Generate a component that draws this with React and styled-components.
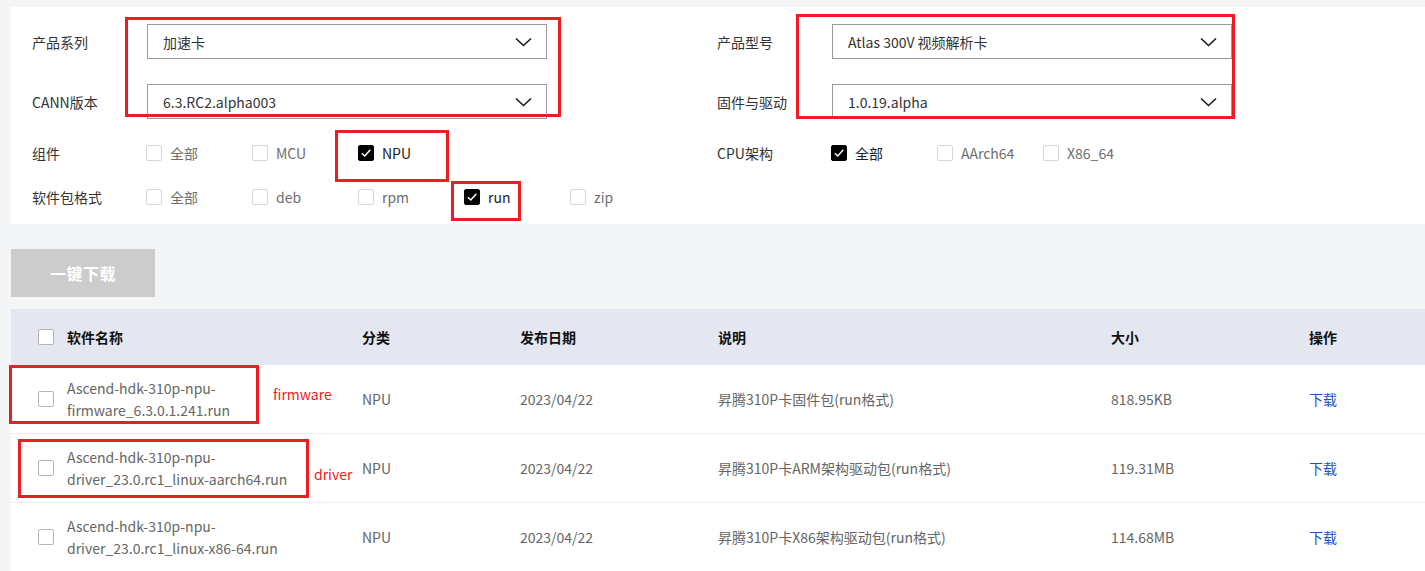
import React from "react";
import styled, { createGlobalStyle } from "styled-components";

const GlobalStyle = createGlobalStyle`
  html, body {
    margin: 0;
    padding: 0;
    background: #f4f5f7;
    font-family: "Noto Sans CJK SC", "Noto Sans", sans-serif;
  }
  * { box-sizing: border-box; }
`;

const Page = styled.div`
  position: relative;
  width: 1425px;
  min-height: 571px;
  overflow: hidden;
  padding-top: 7px;
  padding-left: 11px;
`;

const Panel = styled.section`
  background: #ffffff;
  padding: 17px 0 5px 21px;
  display: flex;
  flex-direction: column;
`;

const PanelRow = styled.div`
  display: grid;
  grid-template-columns: 685px 1fr;
  height: ${(p) => p.$h}px;
  margin-top: ${(p) => p.$mt || 0}px;
`;

const Field = styled.div`
  display: flex;
  align-items: center;
  height: 100%;
`;

const FieldLabel = styled.div`
  width: 114px;
  flex: none;
  font-size: 14px;
  color: #333333;
  line-height: 20px;
  padding-top: ${(p) => (p.$select ? 1 : 0)}px;
`;

const SelectBox = styled.div`
  width: 400px;
  height: 35px;
  margin-left: 1px;
  border: 1px solid #9a9a9a;
  display: flex;
  align-items: center;
  justify-content: space-between;
  padding: 0 14px 0 15px;
  font-size: 14px;
  color: #333333;
  background: #fff;
`;

const CheckGroup = styled.div`
  display: flex;
  align-items: center;
`;

const CheckItem = styled.label`
  width: 106px;
  display: flex;
  align-items: center;
  gap: 8px;
  font-size: 14px;
  color: ${(p) => (p.$checked ? "#222222" : "#6e6e6e")};
`;

const Box = styled.span`
  width: 16px;
  height: 16px;
  flex: none;
  border-radius: 2px;
  display: inline-flex;
  align-items: center;
  justify-content: center;
  background: ${(p) => (p.$checked ? "#000000" : "#ffffff")};
  border: 1px solid ${(p) => (p.$checked ? "#000000" : p.$dark ? "#b5b5b5" : "#d6d6d6")};
`;

const Button = styled.button`
  display: block;
  margin-top: 25px;
  width: 144px;
  height: 48px;
  border: none;
  background: #cccccc;
  color: #ffffff;
  font-family: inherit;
  font-size: 16px;
  font-weight: 700;
  letter-spacing: 0.5px;
`;

const Table = styled.div`
  margin-top: 12px;
  background: #ffffff;
`;

const cols = "351px 158px 198px 393px 198px 1fr";

const HeadRow = styled.div`
  display: grid;
  grid-template-columns: ${cols};
  height: 56px;
  align-items: center;
  background: #e4e7f0;
  font-size: 14px;
  font-weight: 700;
  color: #111111;
`;

const BodyRow = styled.div`
  display: grid;
  grid-template-columns: ${cols};
  height: 69px;
  align-items: center;
  border-bottom: 1px solid #eeeeee;
  font-size: 14px;
  color: #666666;
`;

const NameCell = styled.div`
  display: flex;
  align-items: center;
  gap: 13px;
  padding-left: 27px;
`;

const NameText = styled.div`
  line-height: 22px;
  display: flex;
  flex-direction: column;
`;

const Cell = styled.div`
  white-space: nowrap;
`;

const Link = styled.a`
  color: #2150c6;
  text-decoration: none;
`;

const Mark = styled.div`
  position: absolute;
  left: ${(p) => p.$x}px;
  top: ${(p) => p.$y}px;
  width: ${(p) => p.$w}px;
  height: ${(p) => p.$h}px;
  border: 3px solid #ee1c25;
  pointer-events: none;
`;

const Note = styled.span`
  position: absolute;
  left: ${(p) => p.$x}px;
  top: ${(p) => p.$y}px;
  color: #ee1c25;
  font-size: 14px;
  line-height: 20px;
`;

const Chevron = () => (
  <svg width="17" height="10" viewBox="0 0 17 10" fill="none">
    <polyline points="1,1.5 8.5,8.5 16,1.5" stroke="#1a1a1a" strokeWidth="1.6" />
  </svg>
);

const Tick = () => (
  <svg width="12" height="12" viewBox="0 0 12 12" fill="none">
    <polyline points="1.8,6.2 4.8,9 10.3,2.8" stroke="#ffffff" strokeWidth="1.5" />
  </svg>
);

const Check = ({ checked, dark }) => (
  <Box $checked={checked} $dark={dark}>{checked && <Tick />}</Box>
);

const Option = ({ label, checked }) => (
  <CheckItem $checked={checked}>
    <Check checked={checked} />
    {label}
  </CheckItem>
);

const Select = ({ value }) => (
  <SelectBox>
    <span>{value}</span>
    <Chevron />
  </SelectBox>
);

const rows = [
  {
    name: ["Ascend-hdk-310p-npu-", "firmware_6.3.0.1.241.run"],
    desc: "昇腾310P卡固件包(run格式)",
    size: "818.95KB",
  },
  {
    name: ["Ascend-hdk-310p-npu-", "driver_23.0.rc1_linux-aarch64.run"],
    desc: "昇腾310P卡ARM架构驱动包(run格式)",
    size: "119.31MB",
  },
  {
    name: ["Ascend-hdk-310p-npu-", "driver_23.0.rc1_linux-x86-64.run"],
    desc: "昇腾310P卡X86架构驱动包(run格式)",
    size: "114.68MB",
  },
];

export default function App() {
  return (
    <Page>
      <GlobalStyle />
      <Panel>
        <PanelRow $h={35}>
          <Field>
            <FieldLabel $select>产品系列</FieldLabel>
            <Select value="加速卡" />
          </Field>
          <Field>
            <FieldLabel $select>产品型号</FieldLabel>
            <Select value="Atlas 300V 视频解析卡" />
          </Field>
        </PanelRow>
        <PanelRow $h={35} $mt={25}>
          <Field>
            <FieldLabel $select>CANN版本</FieldLabel>
            <Select value="6.3.RC2.alpha003" />
          </Field>
          <Field>
            <FieldLabel $select>固件与驱动</FieldLabel>
            <Select value="1.0.19.alpha" />
          </Field>
        </PanelRow>
        <PanelRow $h={44} $mt={12}>
          <Field>
            <FieldLabel>组件</FieldLabel>
            <CheckGroup>
              <Option label="全部" />
              <Option label="MCU" />
              <Option label="NPU" checked />
            </CheckGroup>
          </Field>
          <Field>
            <FieldLabel>CPU架构</FieldLabel>
            <CheckGroup>
              <Option label="全部" checked />
              <Option label="AArch64" />
              <Option label="X86_64" />
            </CheckGroup>
          </Field>
        </PanelRow>
        <PanelRow $h={44}>
          <Field>
            <FieldLabel>软件包格式</FieldLabel>
            <CheckGroup>
              <Option label="全部" />
              <Option label="deb" />
              <Option label="rpm" />
              <Option label="run" checked />
              <Option label="zip" />
            </CheckGroup>
          </Field>
          <div />
        </PanelRow>
      </Panel>

      <Button>一键下载</Button>

      <Table>
        <HeadRow>
          <NameCell>
            <Check dark />
            <span>软件名称</span>
          </NameCell>
          <Cell>分类</Cell>
          <Cell>发布日期</Cell>
          <Cell>说明</Cell>
          <Cell>大小</Cell>
          <Cell>操作</Cell>
        </HeadRow>
        {rows.map((r, i) => (
          <BodyRow key={i}>
            <NameCell>
              <Check dark />
              <NameText>
                <span>{r.name[0]}</span>
                <span>{r.name[1]}</span>
              </NameText>
            </NameCell>
            <Cell>NPU</Cell>
            <Cell>2023/04/22</Cell>
            <Cell>{r.desc}</Cell>
            <Cell>{r.size}</Cell>
            <Cell>
              <Link href="#">下载</Link>
            </Cell>
          </BodyRow>
        ))}
      </Table>

      <Mark $x={125} $y={17} $w={436} $h={100} />
      <Mark $x={796} $y={14} $w={439} $h={105} />
      <Mark $x={335} $y={130} $w={114} $h={52} />
      <Mark $x={451} $y={181} $w={70} $h={40} />
      <Mark $x={9} $y={365} $w={250} $h={59} />
      <Mark $x={18} $y={439} $w={291} $h={59} />
      <Note $x={273} $y={384}>firmware</Note>
      <Note $x={314} $y={464}>driver</Note>
    </Page>
  );
}
